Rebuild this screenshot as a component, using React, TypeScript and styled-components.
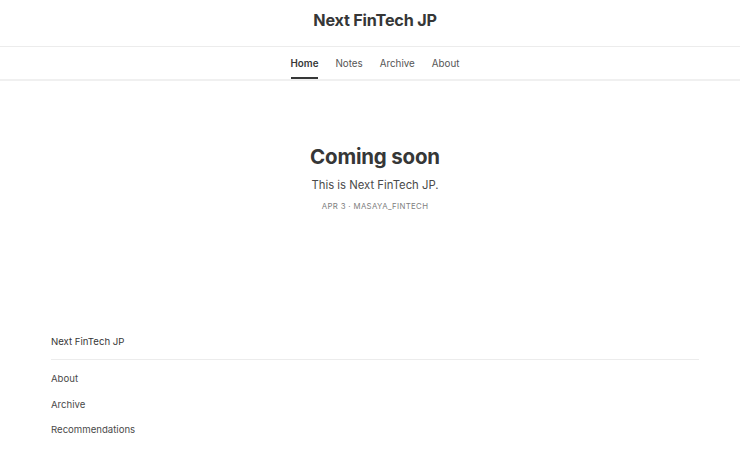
import styled, { createGlobalStyle } from "styled-components";

const GlobalStyle = createGlobalStyle`
  html, body {
    margin: 0;
    padding: 0;
    background: #fff;
    overflow: hidden;
  }
  body {
    font-family: Inter, "Noto Sans", sans-serif;
    color: #363737;
    -webkit-font-smoothing: antialiased;
  }
`;

const navItems = ["Home", "Notes", "Archive", "About"];
const footerLinks = ["About", "Archive", "Recommendations"];

export default function App() {
  return (
    <Page>
      <GlobalStyle />
      <Header>
        <SiteTitle>Next FinTech JP</SiteTitle>
      </Header>
      <Nav>
        {navItems.map((item, i) => (
          <NavItem key={item} $active={i === 0}>
            {item}
          </NavItem>
        ))}
      </Nav>
      <Main>
        <Heading>Coming soon</Heading>
        <Subtitle>This is Next FinTech JP.</Subtitle>
        <Meta>Apr 3 · masaya_fintech</Meta>
      </Main>
      <Footer>
        <FooterTitle>Next FinTech JP</FooterTitle>
        <FooterLinks>
          {footerLinks.map((link) => (
            <FooterLink key={link}>{link}</FooterLink>
          ))}
        </FooterLinks>
      </Footer>
    </Page>
  );
}

const Page = styled.div`
  width: 750px;
  min-height: 462px;
  display: flex;
  flex-direction: column;
`;

const Header = styled.header`
  height: 46px;
  display: flex;
  align-items: center;
  justify-content: center;
  border-bottom: 1px solid #ececec;
`;

const SiteTitle = styled.h1`
  margin: 0 0 6px;
  font-size: 16.2px;
  font-weight: 700;
  color: #363737;
  letter-spacing: -0.2px;
`;

const Nav = styled.nav`
  height: 32px;
  display: flex;
  justify-content: center;
  gap: 17px;
  border-bottom: 2px solid #f0f0f0;
`;

const NavItem = styled.a<{ $active?: boolean }>`
  display: flex;
  align-items: center;
  height: 100%;
  box-sizing: border-box;
  padding-top: 3px;
  font-size: 9.8px;
  font-weight: ${(p) => (p.$active ? 600 : 400)};
  color: ${(p) => (p.$active ? "#363737" : "#555")};
  border-bottom: 2px solid ${(p) => (p.$active ? "#363737" : "transparent")};
  margin-bottom: -2px;
  cursor: pointer;
`;

const Main = styled.main`
  display: flex;
  flex-direction: column;
  align-items: center;
  padding-top: 63px;
  height: 250px;
  box-sizing: border-box;
`;

const Heading = styled.h2`
  margin: 0;
  font-size: 20.5px;
  font-weight: 700;
  color: #363737;
  letter-spacing: -0.2px;
  line-height: 26px;
`;

const Subtitle = styled.p`
  margin: 6px 0 0;
  font-size: 11.3px;
  color: #4a4a4a;
  line-height: 18px;
`;

const Meta = styled.div`
  margin-top: 7px;
  font-size: 7.8px;
  text-transform: uppercase;
  letter-spacing: 0.35px;
  color: #808080;
`;

const Footer = styled.footer`
  padding: 0 51px;
`;

const FooterTitle = styled.div`
  font-size: 9.6px;
  color: #363737;
  line-height: 14px;
  padding: 4px 0 10px;
  border-bottom: 1px solid #ececec;
`;

const FooterLinks = styled.div`
  display: flex;
  flex-direction: column;
  padding-top: 12px;
  gap: 11.5px;
`;

const FooterLink = styled.a`
  font-size: 9.6px;
  color: #4a4a4a;
  line-height: 14px;
  cursor: pointer;
`;
